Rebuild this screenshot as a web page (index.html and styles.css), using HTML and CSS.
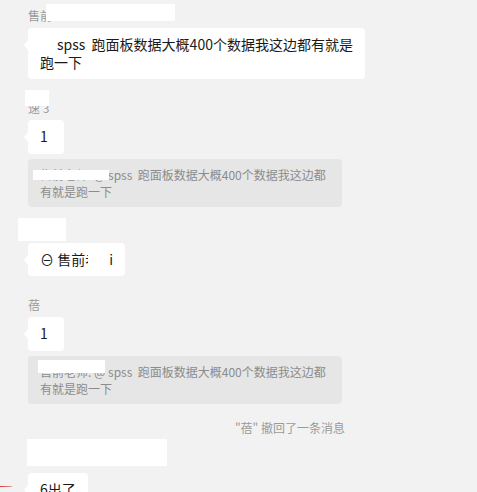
FILE: index.html
```html
<!DOCTYPE html>
<html lang="zh-CN">
<head>
<meta charset="utf-8">
<link rel="stylesheet" href="styles.css">
</head>
<body>
<div class="chat">
  <div class="msg">
    <div class="name">售前<span class="redact r-n1"></span></div>
    <div class="bubble"><span class="lead"></span>spss&nbsp; 跑面板数据大概400个数据我这边都有就是<br>跑一下</div>
  </div>

  <div class="msg quoted">
    <div class="name">速 3<span class="redact r-n2"></span></div>
    <div class="bubble one">1</div>
    <div class="quote">售前老师: @ spss&nbsp; 跑面板数据大概400个数据我这边都<br>有就是跑一下<span class="redact r-q1"></span></div>
  </div>

  <div class="msg">
    <div class="name hidden">售前<span class="redact r-n3"></span></div>
    <div class="bubble">⊖ 售前老<span class="gap"></span>i<span class="redact r-b3"></span></div>
  </div>

  <div class="msg quoted">
    <div class="name">蓓</div>
    <div class="bubble one">1</div>
    <div class="quote">售前老师: @ spss&nbsp; 跑面板数据大概400个数据我这边都<br>有就是跑一下<span class="redact r-q2"></span></div>
  </div>

  <div class="sys">"蓓" 撤回了一条消息</div>

  <div class="msg">
    <div class="name hidden">售前<span class="redact r-n5"></span></div>
    <div class="bubble">6出了</div>
    <span class="redline"></span>
  </div>
</div>
</body>
</html>
```

FILE: styles.css
```css
html, body {
  margin: 0;
  padding: 0;
  background: #f2f2f2;
  overflow: hidden;
}

body {
  width: 477px;
  height: 492px;
  font-family: "Noto Sans CJK SC", "Noto Sans", sans-serif;
  color: #1a1a1a;
}

.chat {
  padding: 7px 0 0 28px;
  display: flex;
  flex-direction: column;
  align-items: flex-start;
}

.msg {
  position: relative;
  display: flex;
  flex-direction: column;
  align-items: flex-start;
  margin-bottom: 20px;
}

.msg.quoted {
  margin-bottom: 15px;
}

.name {
  position: relative;
  font-size: 12px;
  line-height: 17px;
  color: #9a9a9a;
  margin-bottom: 4px;
  white-space: pre;
}

.name.hidden {
  color: transparent;
}

.bubble {
  position: relative;
  background: #ffffff;
  border-radius: 4px;
  padding: 8px 12px 8px 12px;
  font-size: 14px;
  line-height: 17.5px;
  white-space: nowrap;
}

.bubble::before {
  content: "";
  position: absolute;
  left: -4px;
  top: 12px;
  border-top: 5px solid transparent;
  border-bottom: 5px solid transparent;
  border-right: 4px solid #ffffff;
}

.bubble.one {
  min-width: 36px;
  box-sizing: border-box;
}

.lead {
  display: inline-block;
  width: 17px;
}

.gap {
  display: inline-block;
  width: 10px;
}

.quote {
  position: relative;
  margin-top: 5px;
  width: 314px;
  box-sizing: border-box;
  background: #e6e6e6;
  border-radius: 4px;
  padding: 7px 12px;
  font-size: 12px;
  line-height: 17px;
  color: #8c8c8c;
  white-space: nowrap;
}

.sys {
  width: 317px;
  text-align: right;
  font-size: 12px;
  line-height: 17px;
  color: #9a9a9a;
  margin-bottom: 16px;
}

.redact {
  position: absolute;
  background: #ffffff;
}

.r-n1 { left: 18px; top: -3px; width: 129px; height: 17px; }
.r-n2 { left: -3px; top: -9px; width: 24px; height: 16px; }
.r-n3 { left: -10px; top: -4px; width: 48px; height: 23px; }
.r-n5 { left: -1px; top: -13px; width: 140px; height: 27px; }
.r-q1 { left: 5px; top: 11px; width: 76px; height: 10px; }
.r-q2 { left: 10px; top: 4px; width: 67px; height: 13px; }
.r-b3 { left: 60px; top: 6px; width: 19px; height: 22px; }

.redline {
  position: absolute;
  left: -28px;
  top: 34px;
  width: 12px;
  height: 1px;
  background: linear-gradient(to right, #d43a3a, #e89a9a);
}
```
